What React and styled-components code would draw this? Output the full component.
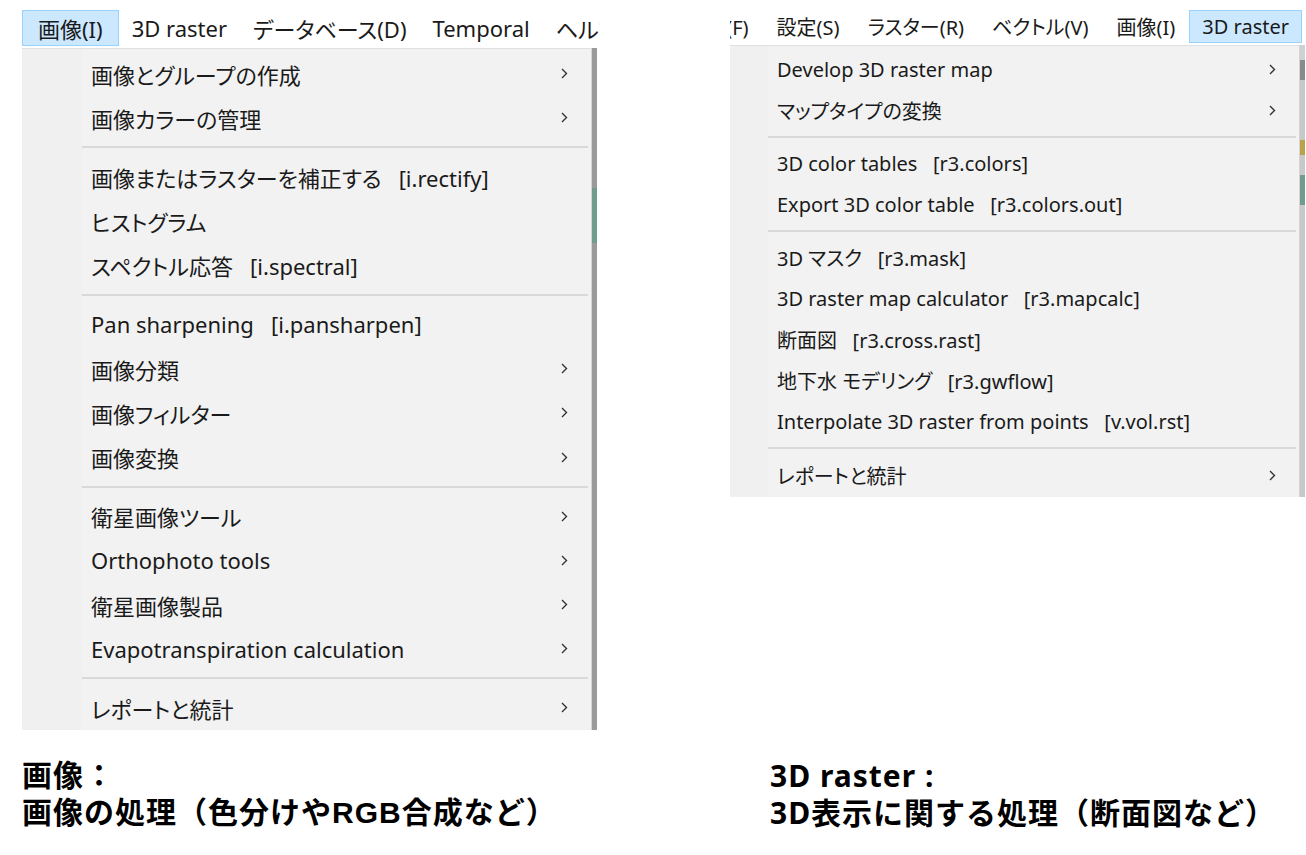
import React from 'react';
import styled, { createGlobalStyle } from 'styled-components';

const GlobalStyle = createGlobalStyle`
  html, body {
    margin: 0;
    background: #fff;
  }
  body {
    font-family: "Noto Sans", "Noto Sans CJK JP", sans-serif;
    color: #000;
  }
`;

const Page = styled.div`
  display: grid;
  grid-template-columns: 578px 576px;
  column-gap: 130px;
  align-items: start;
  padding: 10px 0 0 22px;
  width: 1306px;
  box-sizing: border-box;
`;

const Panel = styled.div`
  display: flex;
  flex-direction: column;
  overflow: hidden;
  font-size: ${p => p.$fs}px;
  font-feature-settings: "palt";
  color: #1a1a1a;
`;

const MenuBar = styled.div`
  display: flex;
  justify-content: ${p => (p.$right ? 'flex-end' : 'flex-start')};
  height: ${p => p.$h}px;
  padding-right: ${p => (p.$right ? 4 : 0)}px;
  margin-bottom: 2px;
  white-space: nowrap;
  overflow: hidden;
`;

const BarItem = styled.div`
  flex: none;
  display: flex;
  align-items: center;
  padding: 0 ${p => p.$pad}px;
  border: 1px solid ${p => (p.$active ? '#99d1ff' : 'transparent')};
  background: ${p => (p.$active ? '#cce8ff' : 'transparent')};
`;

const DropWrap = styled.div`
  display: flex;
  align-items: stretch;
`;

const Dropdown = styled.div`
  width: 570px;
  box-sizing: border-box;
  border-top: 1px solid #e0e0e0;
  border-right: 1px solid #d4d4d4;
  padding: ${p => p.$padT}px 0 ${p => p.$padB}px;
  background: linear-gradient(to right, #f0f0f0 ${p => p.$gutter}px, #f2f2f2 ${p => p.$gutter}px);
`;

/* sliver of the application window visible behind the menu */
const Behind = styled.div`
  width: ${p => p.$w}px;
  background: ${p => p.$bg};
`;

const Row = styled.div`
  display: flex;
  align-items: center;
  justify-content: space-between;
  height: ${p => p.$h}px;
  padding-left: ${p => p.$textX}px;
  padding-right: ${p => p.$chevR}px;
  white-space: pre;
`;

const Sep = styled.div`
  height: ${p => p.$h}px;
  margin-left: ${p => p.$gutter}px;
  margin-right: 3px;
  display: flex;
  align-items: center;
  &::before {
    content: "";
    flex: 1;
    height: 2px;
    background: #d9d9d9;
  }
`;

const Caption = styled.div`
  margin-top: ${p => p.$top}px;
  padding-left: ${p => p.$indent}px;
  font-family: ${p => p.$latin}, "Noto Sans CJK JP", sans-serif;
  font-weight: 700;
  font-size: 30px;
  line-height: 37px;
  letter-spacing: 1px;
  color: #000;
`;

const Chevron = () => (
  <svg width="8" height="13" viewBox="0 0 8 13">
    <path d="M2 2 L6.5 6.5 L2 11" fill="none" stroke="#333" strokeWidth="1.4" />
  </svg>
);

const leftBar = ['画像(I)', '3D raster', 'データベース(D)', 'Temporal', 'ヘルプ(H)'];
const rightBar = ['ファイル(F)', '設定(S)', 'ラスター(R)', 'ベクトル(V)', '画像(I)', '3D raster'];

const leftMenu = [
  ['画像とグループの作成', true],
  ['画像カラーの管理', true],
  null,
  ['画像またはラスターを補正する   [i.rectify]'],
  ['ヒストグラム'],
  ['スペクトル応答   [i.spectral]'],
  null,
  ['Pan sharpening   [i.pansharpen]'],
  ['画像分類', true],
  ['画像フィルター', true],
  ['画像変換', true],
  null,
  ['衛星画像ツール', true],
  ['Orthophoto tools', true],
  ['衛星画像製品', true],
  ['Evapotranspiration calculation', true],
  null,
  ['レポートと統計', true],
];

const rightMenu = [
  ['Develop 3D raster map', true],
  ['マップタイプの変換', true],
  null,
  ['3D color tables   [r3.colors]'],
  ['Export 3D color table   [r3.colors.out]'],
  null,
  ['3D マスク   [r3.mask]'],
  ['3D raster map calculator   [r3.mapcalc]'],
  ['断面図   [r3.cross.rast]'],
  ['地下水 モデリング   [r3.gwflow]'],
  ['Interpolate 3D raster from points   [v.vol.rst]'],
  null,
  ['レポートと統計', true],
];

const MenuShot = ({ bar, active, right, items, cfg }) => (
  <Panel $fs={cfg.fs}>
    <MenuBar $h={cfg.barH} $right={right}>
      {bar.map(b => (
        <BarItem key={b} $pad={b === active ? cfg.activePad : cfg.barPad} $active={b === active}>
          {b}
        </BarItem>
      ))}
    </MenuBar>
    <DropWrap>
      <Dropdown $padT={cfg.padT} $padB={cfg.padB} $gutter={cfg.gutter}>
        {items.map((it, i) =>
          it ? (
            <Row key={i} $h={cfg.rowH} $textX={cfg.textX} $chevR={cfg.chevR}>
              <span>{it[0]}</span>
              {it[1] && <Chevron />}
            </Row>
          ) : (
            <Sep key={i} $h={cfg.sepH} $gutter={cfg.gutter} />
          )
        )}
      </Dropdown>
      <Behind $w={cfg.behindW} $bg={cfg.behindBg} />
    </DropWrap>
  </Panel>
);

const leftCfg = {
  fs: 22, barH: 36, barPad: 12, activePad: 15, padT: 2.5, padB: 0, gutter: 60, textX: 69, chevR: 23,
  rowH: 44.3, sepH: 14.6, behindW: 5,
  behindBg: 'linear-gradient(to bottom, #9a9a9a 0, #9a9a9a 140px, #6f9c8e 140px, #6f9c8e 195px, #9a9a9a 195px)',
};

const rightCfg = {
  fs: 20, barH: 33, barPad: 13, activePad: 12, padT: 3, padB: 1, gutter: 38, textX: 47, chevR: 23,
  rowH: 41, sepH: 12.2, behindW: 5,
  behindBg: 'linear-gradient(to bottom, #d0d0d0 0, #d0d0d0 15px, #8a8a8a 15px, #8a8a8a 35px, #c8c8c8 35px, #c8c8c8 95px, #b8a24a 95px, #b8a24a 110px, #c8c8c8 110px, #c8c8c8 130px, #6f9c8e 130px, #6f9c8e 160px, #c8c8c8 160px)',
};

export default function App() {
  return (
    <>
      <GlobalStyle />
      <Page>
        <MenuShot bar={leftBar} active="画像(I)" items={leftMenu} cfg={leftCfg} />
        <MenuShot bar={rightBar} active="3D raster" right items={rightMenu} cfg={rightCfg} />
        <Caption $top={27} $indent={0} $latin={'"Liberation Sans"'}>
          画像：<br />
          画像の処理（色分けやRGB合成など）
        </Caption>
        <Caption $top={27} $indent={40} $latin={'"Noto Sans"'}>
          3D raster :<br />
          3D表示に関する処理（断面図など）
        </Caption>
      </Page>
    </>
  );
}
